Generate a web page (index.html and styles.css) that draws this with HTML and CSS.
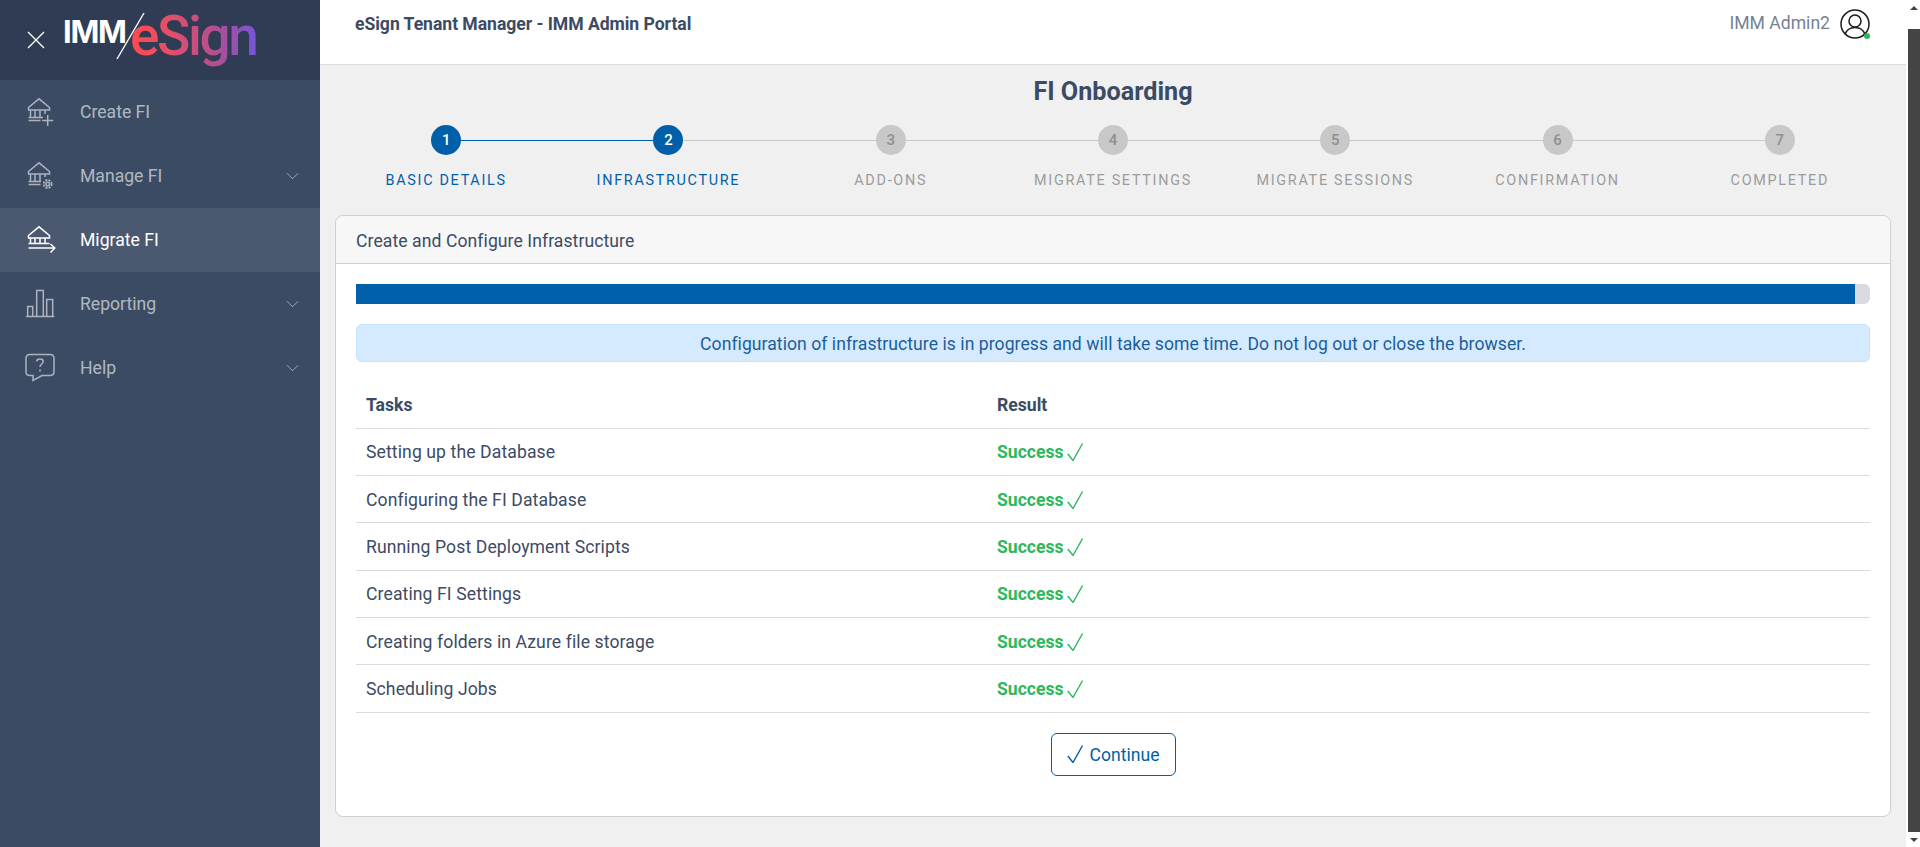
FILE: index.html
```html
<!DOCTYPE html>
<html lang="en">
<head>
<meta charset="utf-8">
<title>FI Onboarding</title>
<link rel="stylesheet" href="styles.css">
</head>
<body>
<div class="app">
  <aside class="sidebar">
    <div class="brand">
      <svg class="close" viewBox="0 0 18 18"><path d="M1 1L17 17M17 1L1 17"/></svg>
      <div class="logo">
        <span class="logo-imm">IMM</span>
        <svg class="logo-slash" viewBox="0 0 30 48"><path d="M1 47L28 1"/></svg>
        <span class="logo-esign">eSign</span>
      </div>
    </div>
    <nav class="nav">
      <a class="nav-item">
        <svg class="nav-icon" viewBox="0 0 29 29"><path d="M3.500 9.500L14 .8L24.500 9.500V12H3.500ZM5.500 12V19M10 12V19M15 12V19M20 12V16M3.500 19.500H18M3.500 22.500H15.500"/><path d="M22.700 17V28M17.200 22.500H28.200"/></svg>
        <span class="nav-label">Create FI</span>
      </a>
      <a class="nav-item">
        <svg class="nav-icon" viewBox="0 0 29 29"><path d="M3.500 9.500L14 .8L24.500 9.500V12H3.500ZM5.500 12V19M10 12V19M15 12V19M20 12V15M3.500 19.500H16M3.500 22.500H15.500"/><circle cx="22.700" cy="22" r="1.800"/><circle class="gear" cx="22.700" cy="22" r="4"/></svg>
        <span class="nav-label">Manage FI</span>
        <svg class="chev" viewBox="0 0 14 8"><path d="M1 1L7 7L13 1"/></svg>
      </a>
      <a class="nav-item active">
        <svg class="nav-icon" viewBox="0 0 29 29"><path d="M3.500 9.500L14 .8L24.500 9.500V12H3.500ZM5.500 12V17M10 12V17M15 12V17M20 12V17M3.500 17.500H24.500M3.500 22H29.500M25.500 18L29.800 22L25.500 26.500"/></svg>
        <span class="nav-label">Migrate FI</span>
      </a>
      <a class="nav-item">
        <svg class="nav-icon" viewBox="0 0 29 29"><path d="M1 26.500H29.300M2.700 26.500V16.500H7.700V26.500M11.700 26.500V.5H18.300V26.500M21.700 26.500V9.500H27.700V26.500"/></svg>
        <span class="nav-label">Reporting</span>
        <svg class="chev" viewBox="0 0 14 8"><path d="M1 1L7 7L13 1"/></svg>
      </a>
      <a class="nav-item">
        <svg class="nav-icon" viewBox="0 0 29 29"><path d="M5 .5H25C27.500 .5 29 2 29 4.500V17.500C29 20 27.500 21.500 25 21.500H17L8 26.500V21.500H5C2.500 21.500 1 20 1 17.500V4.500C1 2 2.500 .5 5 .5Z"/><path d="M11.800 7.500C11.800 5.800 13.200 5 15 5C16.800 5 18.200 5.800 18.200 7.500C18.200 10 15 10 15 13M15 15.500V17.500"/></svg>
        <span class="nav-label">Help</span>
        <svg class="chev" viewBox="0 0 14 8"><path d="M1 1L7 7L13 1"/></svg>
      </a>
    </nav>
  </aside>

  <div class="main">
    <header class="topbar">
      <div class="topbar-title">eSign Tenant Manager - IMM Admin Portal</div>
      <div class="user">
        <span class="user-name">IMM Admin2</span>
        <span class="avatar">
          <svg viewBox="0 0 30 30"><circle cx="15" cy="15" r="14"/><circle cx="15" cy="12" r="6"/><path d="M5 25.500C6.500 21 10 18.500 15 18.500C20 18.500 23.500 21 25 25.500"/></svg>
          <i class="status-dot"></i>
        </span>
      </div>
    </header>

    <main class="content">
      <h1 class="page-title">FI Onboarding</h1>
      <ol class="stepper">
        <li class="step done"><span class="step-num">1</span><span class="step-label">Basic Details</span></li>
        <li class="step current"><span class="step-num">2</span><span class="step-label">Infrastructure</span></li>
        <li class="step"><span class="step-num">3</span><span class="step-label">Add-ons</span></li>
        <li class="step"><span class="step-num">4</span><span class="step-label">Migrate Settings</span></li>
        <li class="step"><span class="step-num">5</span><span class="step-label">Migrate Sessions</span></li>
        <li class="step"><span class="step-num">6</span><span class="step-label">Confirmation</span></li>
        <li class="step"><span class="step-num">7</span><span class="step-label">Completed</span></li>
      </ol>

      <section class="card">
        <div class="card-header">Create and Configure Infrastructure</div>
        <div class="card-body">
          <div class="progress"><div class="progress-bar" style="width:99%"></div></div>
          <div class="alert">Configuration of infrastructure is in progress and will take some time. Do not log out or close the browser.</div>
          <table class="tasks">
            <thead><tr><th>Tasks</th><th>Result</th></tr></thead>
            <tbody>
              <tr><td>Setting up the Database</td><td><span class="ok">Success<svg class="tick" viewBox="0 0 16 18"><path d="M.8 11L6 17.500L15.500 .5"/></svg></span></td></tr>
              <tr><td>Configuring the FI Database</td><td><span class="ok">Success<svg class="tick" viewBox="0 0 16 18"><path d="M.8 11L6 17.500L15.500 .5"/></svg></span></td></tr>
              <tr><td>Running Post Deployment Scripts</td><td><span class="ok">Success<svg class="tick" viewBox="0 0 16 18"><path d="M.8 11L6 17.500L15.500 .5"/></svg></span></td></tr>
              <tr><td>Creating FI Settings</td><td><span class="ok">Success<svg class="tick" viewBox="0 0 16 18"><path d="M.8 11L6 17.500L15.500 .5"/></svg></span></td></tr>
              <tr><td>Creating folders in Azure file storage</td><td><span class="ok">Success<svg class="tick" viewBox="0 0 16 18"><path d="M.8 11L6 17.500L15.500 .5"/></svg></span></td></tr>
              <tr><td>Scheduling Jobs</td><td><span class="ok">Success<svg class="tick" viewBox="0 0 16 18"><path d="M.8 11L6 17.500L15.500 .5"/></svg></span></td></tr>
            </tbody>
          </table>
          <div class="actions">
            <button class="btn" type="button"><svg class="btn-tick" viewBox="0 0 16 18"><path d="M.8 11L6 17.500L15.500 .5"/></svg><span class="btn-label">Continue</span></button>
          </div>
        </div>
      </section>
    </main>
  </div>

  <div class="scrollbar">
    <span class="arrow up"></span>
    <div class="thumb"></div>
    <span class="arrow down"></span>
  </div>
</div>
</body>
</html>
```
FILE: styles.css
```css
* { box-sizing: border-box; }
html, body { height: 100%; }
body {
  margin: 0;
  overflow: hidden;
  font-family: Roboto, "Liberation Sans", sans-serif;
  font-size: 17.600px;
  color: #3c4b64;
  background: #f0f0f1;
}
.app { display: flex; height: 847px; }

/* sidebar */
.sidebar { width: 320px; flex: none; background: #3c4b64; }
.brand {
  height: 80px;
  background: #303c54;
  display: flex;
  align-items: center;
  padding-left: 27px;
}
.close { width: 18px; height: 18px; flex: none; }
.close path { fill: none; stroke: #fff; stroke-width: 1.300; }
.logo { display: flex; align-items: center; margin-left: 18px; height: 80px; position: relative; }
.logo-imm {
  font-family: Inter, Roboto, sans-serif;
  font-weight: 700;
  font-size: 31px;
  letter-spacing: -1.300px;
  color: #fff;
  margin-top: -18px;
  width: 67px;
}
.logo-slash {
  position: absolute;
  left: 53px;
  top: 12px;
  width: 30px;
  height: 48px;
}
.logo-slash path { fill: none; stroke: #fff; stroke-width: 1.400; }
.logo-esign {
  font-family: Roboto, Inter, sans-serif;
  font-weight: 500;
  font-size: 55px;
  letter-spacing: -2.400px;
  line-height: 72px;
  margin-top: -8px;
  background: linear-gradient(90deg, #ff4a4f 0%, #e54f68 30%, #b64e8e 65%, #7456d6 100%);
  -webkit-background-clip: text;
  background-clip: text;
  color: transparent;
}
.nav-item {
  height: 64px;
  display: flex;
  align-items: center;
  padding-left: 25px;
  padding-right: 20px;
  color: rgba(255, 255, 255, .62);
}
.nav-item.active { background: #4a5870; color: #fff; }
.nav-icon { width: 29px; height: 29px; flex: none; overflow: visible; }
.nav-icon path, .nav-icon circle { fill: none; stroke: rgba(255, 255, 255, .58); stroke-width: 1.500; }
.nav-icon .gear { stroke-width: 1.800; stroke-dasharray: 2 1.190; }
.nav-item.active .nav-icon path { stroke: #fff; }
.nav-label { margin-left: 26px; flex: 1; line-height: 26px; }
.chev { width: 13px; height: 8px; flex: none; margin-right: 1px; }
.chev path { fill: none; stroke: rgba(255, 255, 255, .55); stroke-width: 1; }

/* main */
.main { flex: 1; min-width: 0; display: flex; flex-direction: column; }
.topbar {
  height: 65px;
  flex: none;
  background: #fff;
  border-bottom: 1px solid #d8dbe0;
  display: flex;
  justify-content: space-between;
  padding: 9px 36px 0 35px;
}
.topbar-title { font-weight: 700; line-height: 30px; color: #3c4b64; letter-spacing: -0.04px; }
.user { display: flex; align-items: flex-start; }
.user-name { line-height: 28px; color: #768192; }
.avatar { position: relative; width: 30px; height: 30px; margin-left: 10px; display: block; }
.avatar svg { width: 30px; height: 30px; display: block; }
.avatar circle, .avatar path { fill: none; stroke: #1c1c1c; stroke-width: 1.500; }
.status-dot {
  position: absolute;
  right: 0;
  bottom: 0;
  width: 6px;
  height: 6px;
  border-radius: 50%;
  background: #2eb85c;
}
.content { flex: 1; padding: 0 15px; }
.page-title {
  margin: 12px 0 0;
  text-align: center;
  font-size: 25.200px;
  line-height: 29px;
  font-weight: 700;
  color: #3c4b64;
}

/* stepper */
.stepper { display: grid; grid-template-columns: repeat(7, 1fr); list-style: none; margin: 19px 0 0; padding: 0; height: 90px; }
.step { position: relative; display: flex; flex-direction: column; align-items: center; }
.step::after {
  content: "";
  position: absolute;
  top: 15px;
  left: 50%;
  width: 100%;
  height: 1px;
  background: #c8c8c8;
}
.step:last-child::after { display: none; }
.step.done::after { background: #005fa9; }
.step-num {
  position: relative;
  z-index: 1;
  width: 30px;
  height: 30px;
  border-radius: 50%;
  background: #c8c8c8;
  color: #8f8f8f;
  font-size: 15px;
  font-weight: 500;
  line-height: 30px;
  text-align: center;
}
.step.done .step-num, .step.current .step-num { background: #005fa9; color: #fff; }
.step-label {
  margin-top: 16px;
  font-size: 14.400px;
  line-height: 20px;
  letter-spacing: 1.700px;
  text-transform: uppercase;
  color: #9c9c9c;
}
.step.done .step-label, .step.current .step-label { color: #005fa9; }

/* card */
.card {
  height: 602px;
  background: #fff;
  border: 1px solid #d0d0d4;
  border-radius: 8px;
}
.card-header {
  height: 48px;
  padding: 0 20px;
  line-height: 50px;
  letter-spacing: .07px;
  background: #f7f7f7;
  border-bottom: 1px solid #d0d0d4;
  border-radius: 8px 8px 0 0;
}
.card-body { padding: 20px 20px 0; }
.progress { height: 20px; border-radius: 0 6px 6px 0; background: #d8dbe0; overflow: hidden; }
.progress-bar { height: 100%; background: #005fa9; }
.alert {
  margin-top: 20px;
  height: 38px;
  line-height: 38px;
  letter-spacing: .045px;
  border: 1px solid #c6e1fb;
  border-radius: 6px;
  background: #d6eaff;
  color: #1a5f9c;
  text-align: center;
}
.tasks { width: 100%; border-collapse: collapse; }
.tasks th { text-align: left; font-weight: 700; height: 66px; padding: 20px 10px 0; }
.tasks td { height: 47.350px; padding: 1px 10px 0; border-top: 1px solid #d8dbe0; letter-spacing: .1px; }
.tasks thead th { border-bottom: 1px solid #d8dbe0; }
.tasks tbody tr:last-child td { border-bottom: 1px solid #d8dbe0; }
.tasks th:first-child, .tasks td:first-child { width: 631px; }
.ok { display: inline-flex; align-items: center; color: #2eb85c; font-weight: 700; letter-spacing: 0; }
.tick { width: 16px; height: 18px; margin-left: 3px; }
.tick path { fill: none; stroke: #2eb85c; stroke-width: 1.400; }
.actions { display: flex; justify-content: center; margin-top: 20px; }
.btn {
  width: 125px;
  height: 43px;
  display: flex;
  align-items: center;
  justify-content: center;
  padding: 0;
  background: #fff;
  border: 1px solid #005fa9;
  border-radius: 6px;
  color: #005fa9;
  font: 400 17.600px Roboto, sans-serif;
}
.btn-label { line-height: 24px; padding-top: 2px; }
.btn-tick { width: 16px; height: 18px; margin-right: 7px; }
.btn-tick path { fill: none; stroke: #005fa9; stroke-width: 1.400; }

/* scrollbar */
.scrollbar { width: 14px; flex: none; background: #fff; display: flex; flex-direction: column; align-items: flex-end; }
.thumb { width: 12px; flex: 1; background: #444; }
.arrow { width: 12px; height: 29px; display: flex; justify-content: center; align-items: center; flex: none; }
.arrow.down { height: 15px; }
.arrow.up::before { content: ""; border: 4px solid transparent; border-top: 0; border-bottom: 4px solid #444; margin-top: -14px; }
.arrow.down::before { content: ""; border: 4px solid transparent; border-bottom: 0; border-top: 4px solid #444; }
```
